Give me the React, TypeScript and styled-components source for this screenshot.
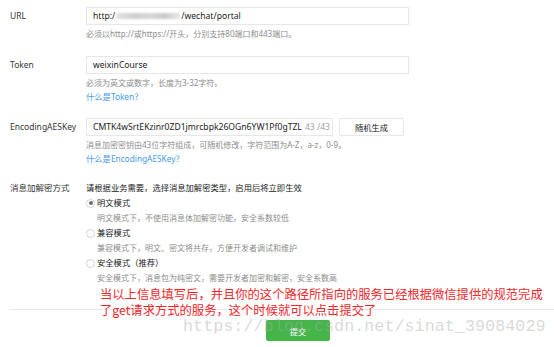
import React from 'react';
import styled, { createGlobalStyle } from 'styled-components';

const GlobalStyle = createGlobalStyle`
  html, body {
    margin: 0;
    padding: 0;
    background: #ffffff;
  }
  body {
    font-family: "Noto Sans", "Noto Sans CJK SC", sans-serif;
    color: #353535;
  }
`;

const Page = styled.div`
  position: relative;
  width: 554px;
  height: 347px;
  overflow: hidden;
  padding-top: 7px;
  box-sizing: border-box;
`;

const Form = styled.div`
  display: flex;
  flex-direction: column;
  padding-left: 10px;
`;

const Row = styled.div<{ $gap?: number }>`
  display: grid;
  grid-template-columns: 76px 1fr;
  margin-top: ${({ $gap }) => $gap ?? 0}px;
`;

const Label = styled.div<{ $align?: 'center' | 'start' }>`
  font-size: 8.5px;
  line-height: 18px;
  color: #353535;
  white-space: nowrap;
  align-self: start;
  ${({ $align }) => ($align === 'start' ? 'line-height: 14px;' : '')}
`;

const Field = styled.div`
  display: flex;
  flex-direction: column;
`;

const InputLine = styled.div`
  display: flex;
  gap: 6px;
`;

const Input = styled.div<{ $width: number }>`
  width: ${({ $width }) => $width}px;
  height: 18px;
  box-sizing: border-box;
  border: 1px solid #e7e7eb;
  background: #fff;
  display: flex;
  align-items: center;
  padding: 0 6px;
  font-size: 8.6px;
  color: #222;
  white-space: nowrap;
  overflow: hidden;
`;

const Blurred = styled.span`
  display: inline-block;
  width: 64px;
  height: 6px;
  margin: 0 1px;
  background: linear-gradient(90deg, #e2e2e2 0%, #cfcfcf 30%, #d8d8d8 55%, #c9c9c9 75%, #e6e6e6 100%);
  filter: blur(1.2px);
`;

const Counter = styled.span`
  margin-left: 3px;
  color: #a0a0a0;
`;

const GhostButton = styled.div`
  width: 65px;
  height: 18px;
  box-sizing: border-box;
  border: 1px solid #e7e7eb;
  border-radius: 2px;
  display: flex;
  align-items: center;
  justify-content: center;
  font-size: 8.2px;
  color: #222;
`;

const Hint = styled.div<{ $top?: number }>`
  margin-top: ${({ $top }) => $top ?? 2}px;
  font-size: 8px;
  line-height: 14px;
  color: #8d8d8d;
  white-space: nowrap;
`;

const HelpLink = styled.a`
  font-size: 8.3px;
  line-height: 14px;
  color: #459ae9;
  text-decoration: none;
  white-space: nowrap;
`;

const Lead = styled.div`
  font-size: 8.3px;
  line-height: 14px;
  color: #222;
  white-space: nowrap;
`;

const Options = styled.div`
  display: flex;
  flex-direction: column;
  gap: 2px;
  margin-top: 1px;
`;

const Option = styled.div`
  display: flex;
  flex-direction: column;
`;

const RadioLine = styled.div`
  display: flex;
  align-items: center;
  gap: 2px;
  font-size: 8.3px;
  line-height: 14px;
  color: #222;
`;

const RadioMark = styled.span<{ $checked?: boolean }>`
  width: 9px;
  height: 9px;
  box-sizing: border-box;
  border-radius: 50%;
  border: 1px solid #d4d4d4;
  display: flex;
  align-items: center;
  justify-content: center;

  &::after {
    content: '';
    width: 4px;
    height: 4px;
    border-radius: 50%;
    background: ${({ $checked }) => ($checked ? '#6b6b6b' : 'transparent')};
  }
`;

const OptionDesc = styled(Hint)`
  margin-top: 1px;
  padding-left: 11px;
  line-height: 13px;
`;

const Footer = styled.div`
  margin-top: 25px;
  margin-left: 10px;
  border-top: 1px solid #e7e7eb;
  padding-top: 10px;
  padding-left: 256px;
`;

const Submit = styled.div`
  width: 64px;
  height: 21px;
  border-radius: 2px;
  background: #44b549;
  color: #fff;
  font-size: 8.3px;
  display: flex;
  align-items: center;
  justify-content: center;
`;

const Annotation = styled.div`
  position: absolute;
  left: 100px;
  top: 286px;
  font-family: "Noto Sans CJK SC", sans-serif;
  font-size: 12.3px;
  line-height: 16px;
  color: #f5262a;
  white-space: nowrap;
`;

const Watermark = styled.div`
  position: absolute;
  left: 183px;
  top: 317px;
  font-family: "Liberation Mono", monospace;
  font-size: 16.8px;
  line-height: 20px;
  color: rgba(170, 170, 170, 0.45);
  white-space: nowrap;
  pointer-events: none;
`;

const modes = [
  { title: '明文模式', desc: '明文模式下，不使用消息体加解密功能，安全系数较低', checked: true },
  { title: '兼容模式', desc: '兼容模式下，明文、密文将共存，方便开发者调试和维护', checked: false },
  { title: '安全模式（推荐）', desc: '安全模式下，消息包为纯密文，需要开发者加密和解密，安全系数高', checked: false }
];

export default function App () {
  return (
    <Page>
      <GlobalStyle />
      <Form>
        <Row>
          <Label>URL</Label>
          <Field>
            <Input $width={323}>
              http:/<Blurred />/wechat/portal
            </Input>
            <Hint>必须以http://或https://开头，分别支持80端口和443端口。</Hint>
          </Field>
        </Row>

        <Row $gap={15}>
          <Label>Token</Label>
          <Field>
            <Input $width={323}>weixinCourse</Input>
            <Hint>必须为英文或数字，长度为3-32字符。</Hint>
            <HelpLink href='#'>什么是Token？</HelpLink>
          </Field>
        </Row>

        <Row $gap={14}>
          <Label>EncodingAESKey</Label>
          <Field>
            <InputLine>
              <Input $width={247}>
                CMTK4wSrtEKzinr0ZD1jmrcbpk26OGn6YW1Pf0gTZL
                <Counter>43 /43</Counter>
              </Input>
              <GhostButton>随机生成</GhostButton>
            </InputLine>
            <Hint>消息加密密钥由43位字符组成，可随机修改，字符范围为A-Z，a-z，0-9。</Hint>
            <HelpLink href='#'>什么是EncodingAESKey？</HelpLink>
          </Field>
        </Row>

        <Row $gap={15}>
          <Label $align='start'>消息加解密方式</Label>
          <Field>
            <Lead>请根据业务需要，选择消息加解密类型，启用后将立即生效</Lead>
            <Options>
              {modes.map((mode) => (
                <Option key={mode.title}>
                  <RadioLine>
                    <RadioMark $checked={mode.checked} />
                    {mode.title}
                  </RadioLine>
                  <OptionDesc>{mode.desc}</OptionDesc>
                </Option>
              ))}
            </Options>
          </Field>
        </Row>
      </Form>

      <Footer>
        <Submit>提交</Submit>
      </Footer>

      <Annotation>
        当以上信息填写后，并且你的这个路径所指向的服务已经根据微信提供的规范完成
        <br />
        了get请求方式的服务，这个时候就可以点击提交了
      </Annotation>
      <Watermark>https://blog.csdn.net/sinat_39084029</Watermark>
    </Page>
  );
}
